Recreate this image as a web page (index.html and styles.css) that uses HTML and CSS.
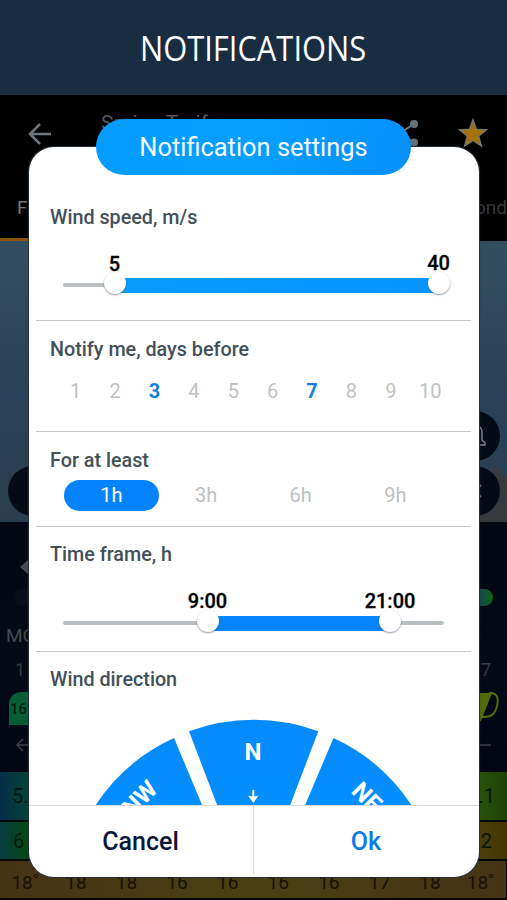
FILE: index.html
```html
<!DOCTYPE html>
<html lang="en">
<head>
<meta charset="utf-8">
<title>Notifications</title>
<link rel="stylesheet" href="styles.css">
</head>
<body>
<main class="screen">
  <header class="banner"><h1>NOTIFICATIONS</h1></header>

  <div class="app" aria-hidden="true">
    <div class="toolbar">
      <svg class="back" width="24" height="24" viewBox="0 0 24 24"><path d="M23 12H2M12 2 2 12l10 10"/></svg>
      <span class="spot">Spring Tarifa</span>
      <svg class="share" width="22" height="28" viewBox="0 0 22 28"><path d="M18 5 4 14l14 9.500"/><circle cx="18" cy="5" r="4"/><circle cx="4" cy="14" r="4"/><circle cx="18" cy="23.500" r="4"/></svg>
      <svg class="star" width="32" height="30" viewBox="0 0 32 30"><path d="m16 2 3.400 9.300 10.100.5-7.900 6.200 2.700 9.800L16 22.300l-8.300 5.500 2.700-9.800-7.900-6.200 10.100-.5z"/></svg>
    </div>
    <div class="tabs"><span>F</span><span>ond</span></div>
    <div class="map">
      <svg class="hills" width="40" height="60" viewBox="0 0 40 60"><path d="M0 40 24 14l4-11 5 8 7 8v41H0z"/></svg>
      <div class="rounds">
        <span class="round bell"><svg width="26" height="28" viewBox="0 0 26 28"><path d="M3 23v-2l3-3v-8a7 7 0 0 1 14 0v8l3 3v2zM11 26h4"/></svg></span>
        <span class="round layers"></span>
        <span class="round close"><svg width="14" height="14" viewBox="0 0 14 14"><path d="M2 2l4 4M12 1 8 5M2 12l4-4M12 13 8 9"/></svg></span>
      </div>
    </div>
    <div class="panel">
      <svg class="nav" width="22" height="20" viewBox="0 0 22 20"><path d="M0 10 9 2v5h13v6H9v5z"/></svg>
      <div class="scale"></div>
      <div class="spread day"><span>MO</span></div>
      <div class="spread hours"><span>1</span><span>7</span></div>
      <div class="gusts">
        <span class="gust">16</span>
        <svg width="30" height="34" viewBox="0 0 30 34"><path class="fill" d="M0 1h23L12 29 0 33z"/><path class="ring" d="M20 1c8-1 10 5 8 13-2 9-6 11-15 11"/><path class="dark" d="M24 5c3 4 1 14-3 18h-6z"/></svg>
      </div>
      <div class="arrows">
        <svg width="22" height="14" viewBox="0 0 22 14"><path d="M22 7H1m6-6L1 7l6 6"/></svg>
        <svg width="22" height="14" viewBox="0 0 22 14"><path d="M22 7H1m6-6L1 7l6 6"/></svg>
      </div>
    </div>
    <div class="row wind"><span>5.</span><span>.1</span></div>
    <div class="row gusty"><span>6</span><span>2</span></div>
    <div class="row temps"><span>18˚</span><span>18</span><span>18</span><span>16</span><span>16</span><span>16</span><span>16</span><span>17</span><span>18</span><span>18˚</span></div>
  </div>

  <section class="dialog" role="dialog">
    <h2 class="pill">Notification settings</h2>
    <div class="block speed">
      <h3>Wind speed, m/s</h3>
      <div class="slider">
        <i class="track"></i><i class="range"></i>
        <span class="thumb low"><b>5</b></span><span class="thumb high"><b>40</b></span>
      </div>
    </div>
    <div class="block days">
      <h3>Notify me, days before</h3>
      <div class="numbers"><span>1</span><span>2</span><b>3</b><span>4</span><span>5</span><span>6</span><b>7</b><span>8</span><span>9</span><span>10</span></div>
    </div>
    <div class="block least">
      <h3>For at least</h3>
      <div class="chips"><span class="on">1h</span><span>3h</span><span>6h</span><span>9h</span></div>
    </div>
    <div class="block frame">
      <h3>Time frame, h</h3>
      <div class="slider">
        <i class="track"></i><i class="range"></i>
        <span class="thumb low"><b>9:00</b></span><span class="thumb high"><b>21:00</b></span>
      </div>
    </div>
    <div class="block direction">
      <h3>Wind direction</h3>
      <svg class="wheel" width="320" height="87" viewBox="93 718 320 87">
        <defs><linearGradient id="blue" x1="0" x2="0" y1="0" y2="1"><stop offset="0" stop-color="#058afc"/><stop offset="1" stop-color="#048efe"/></linearGradient></defs>
        <g fill="url(#blue)">
          <path d="M189 731.300A187 187 0 0 1 318.300 731.300L289.800 806H217.500Z"/>
          <path d="M174 738A187 187 0 0 0 95 806H202.500Z"/>
          <path d="M333.500 738A187 187 0 0 1 412 806H304.700Z"/>
        </g>
        <g class="points">
          <text x="253" y="759.500">N</text>
          <text transform="translate(145.500 804) rotate(-45)">NW</text>
          <text transform="translate(361 803) rotate(45)">NE</text>
        </g>
        <path d="M253.300 790v7" stroke="#fff" stroke-width="2"/><path d="M248 795.500q5 2 10.600 0L253.300 803z" fill="#fff"/>
      </svg>
    </div>
    <footer class="actions"><button class="cancel">Cancel</button><button class="ok">Ok</button></footer>
  </section>
</main>
</body>
</html>
```
FILE: styles.css
```css
* { box-sizing: border-box; }
body { margin: 0; font-family: Roboto, sans-serif; background: #000; }
h1, h2, h3 { margin: 0; }
.screen { position: relative; width: 507px; height: 900px; overflow: hidden; }

.banner { height: 95px; background: #192d42; display: flex; align-items: center; justify-content: center; }
.banner h1 { font: 400 35.5px/50px "Open Sans", sans-serif; color: #fff; white-space: nowrap; transform: scaleX(.87); padding-bottom: 2px; }

/* dimmed forecast screen */
.app svg { fill: none; stroke: #6d7780; stroke-width: 2.500; flex: none; }
.toolbar { height: 95px; padding: 10px 18px 0 28px; display: flex; align-items: flex-start; }
.toolbar .back { margin-top: 17px; }
.toolbar .spot { margin: 4px 0 0 49px; color: #55595d; font-size: 21px; line-height: 28px; flex: 1; }
.toolbar .share { margin: 14px 39px 0 0; stroke-width: 2; }
.toolbar .share circle { stroke: none; fill: #647078; }
.toolbar .star { margin-top: 13px; fill: #a77308; stroke: #77766b; stroke-width: 1.500; }
.tabs { height: 51px; display: flex; justify-content: space-between; padding: 6px 0 0 17px; font-size: 19px; line-height: 24px; color: #777; background: linear-gradient(#8a560a, #8a560a) 0 48px / 90px 3px no-repeat; }
.tabs span + span { color: #34383c; }
.map { height: 281px; background: linear-gradient(#344e61, #294158 55%, #2a3e4d); position: relative; }
.hills { position: absolute; right: 0; bottom: 0; }
.map .hills path { fill: #38393c; stroke: none; }
.rounds { display: grid; grid-template-columns: 50px 50px; justify-content: space-between; row-gap: 5px; padding: 170px 7px 0 8px; position: relative; }
.round { width: 50px; height: 50px; border-radius: 50%; background: #030b17; display: flex; align-items: center; justify-content: center; }
.bell { grid-column: 2; }
.map .bell svg { stroke: #7c828a; stroke-width: 1.500; }
.map .close svg { stroke-width: 1.800; margin-left: 2px; }
.layers { grid-column: 1; }
.panel { height: 250px; background: linear-gradient(#030812, #020b17 60%, #020614); padding-top: 35px; display: flex; flex-direction: column; }
.app .nav { margin-left: 20px; fill: #454a52; stroke: none; }
.scale { height: 17px; margin: 12px 14px 0; border-radius: 9px; background: linear-gradient(90deg, #070f1c 0 30px, #164452 60px, #164452 97%, #0b6513); }
.spread { display: flex; justify-content: space-between; }
.day { font-size: 19px; line-height: 24px; margin: 18px 0 0 6px; color: #454a50; }
.hours { font-size: 18px; line-height: 24px; margin: 10px 16px 0 15px; color: #343b43; }
.gusts { display: flex; justify-content: space-between; margin: 10px 8px 0 9px; height: 34px; }
.gust { width: 40px; height: 33px; background: #075e35; border-radius: 12px 12px 0 0; font: 500 15px/34px Roboto, sans-serif; color: #021c13; padding-left: 1px; }
.gusts .fill { fill: #526b0b; stroke: none; }
.gusts .ring { stroke: #526b0b; stroke-width: 2; }
.gusts .dark { fill: #030c14; stroke: none; }
.arrows { display: flex; justify-content: space-between; margin: 12px 16px 0; }
.arrows svg { stroke: #3d414a; stroke-width: 1.500; }
.row { display: flex; justify-content: space-between; border-bottom: 2px solid #020708; color: #06160d; font-size: 20px; }
.wind { height: 50px; line-height: 49px; padding: 0 12px; background: linear-gradient(90deg, #062e4b, #064237 28px, #2b580c 470px, #1d4303); }
.gusty { height: 39px; line-height: 38px; padding: 0 15px 0 13px; background: linear-gradient(90deg, #063c41, #064910 28px, #4d4106 470px, #443604); }
.temps { height: 39px; line-height: 43px; font-size: 19px; color: #171006; margin-right: 1px; background: linear-gradient(90deg, #463316, #4a4012 50%, #463316); }
.temps span { flex: 1; text-align: center; }

/* notification dialog */
.dialog { position: absolute; left: 28.5px; top: 147px; width: 450px; height: 730px; border-radius: 25px; background: #fff; box-shadow: 0 0 1px 1px #26323b; display: flex; flex-direction: column; }
.pill { position: absolute; left: 67.5px; top: -28px; width: 315px; height: 56px; border-radius: 28px; background: linear-gradient(100deg, #049cff, #059fff 50%, #078ffa); color: #f5fbff; text-align: center; font-weight: 400; font-size: 25.400px; line-height: 56px; white-space: nowrap; }
.block { margin: 0 7.5px; padding: 0 14px; border-bottom: 1px solid #c4c8ca; flex: none; }
.block h3 { color: #435059; font-weight: 500; font-size: 19.750px; line-height: 24px; white-space: nowrap; }
.speed { height: 174px; padding-top: 59px; }
.days { height: 111px; padding-top: 17px; }
.least { height: 95px; padding-top: 17px; }
.frame { height: 125px; padding-top: 16px; }
.direction { height: 153px; padding-top: 16px; border: 0; }

.slider { position: relative; height: 15px; margin: 48px 13px 0; display: flex; align-items: center; }
.frame .slider { margin-top: 49px; }
.track { height: 4px; flex: 1; border-radius: 2px; background: #b9bec1; margin-top: -1px; }
.range { position: absolute; top: 0; bottom: 0; background: linear-gradient(90deg, #079cfe, #0793fe); }
.speed .range { left: 51px; right: 5px; }
.frame .range { left: 145px; right: 54px; background: #0484ff; }
.thumb { position: absolute; top: -6px; width: 22px; height: 22px; border-radius: 50%; background: #fff; box-shadow: 0 1px 2px #526575aa; display: flex; justify-content: center; }
.thumb b { position: absolute; bottom: 19px; font-weight: 500; font-size: 20px; line-height: 24px; color: #000; -webkit-text-stroke: .3px #000; }
.speed .low { left: 40.5px; }
.speed .low b { bottom: 18px; }
.speed .high { left: 364.5px; }
.frame .low { left: 133.5px; }
.frame .high { left: 316px; }

.numbers { display: grid; grid-template-columns: repeat(10, 39.400px); margin: 17px 0 0 6px; font-size: 20px; line-height: 25px; text-align: center; color: #bfc2c4; }
.numbers b { color: #137fe5; }
.chips { display: grid; grid-template-columns: repeat(4, 94.700px); margin: 7px 0 0 14px; text-align: center; color: #bdbfc1; font-size: 20px; line-height: 31px; }
.chips .on { color: #fff; background: #0583ff; border-radius: 16px; }
.wheel { display: block; margin: 26px 0 0 43px; }
.points { fill: #fff; font: 700 24px Roboto, sans-serif; text-anchor: middle; }

.actions { flex: 1; display: grid; grid-template-columns: 1fr 1fr; border-top: 1px solid #d7d9db; }
.actions button { border: 0; background: none; padding: 3px 0 0; margin-bottom: 3px; font: 500 25px/30px Roboto, sans-serif; }
.actions .cancel { color: #07163b; border-right: 1px solid #d7d9db; }
.actions .ok { color: #0b7be8; }
```
